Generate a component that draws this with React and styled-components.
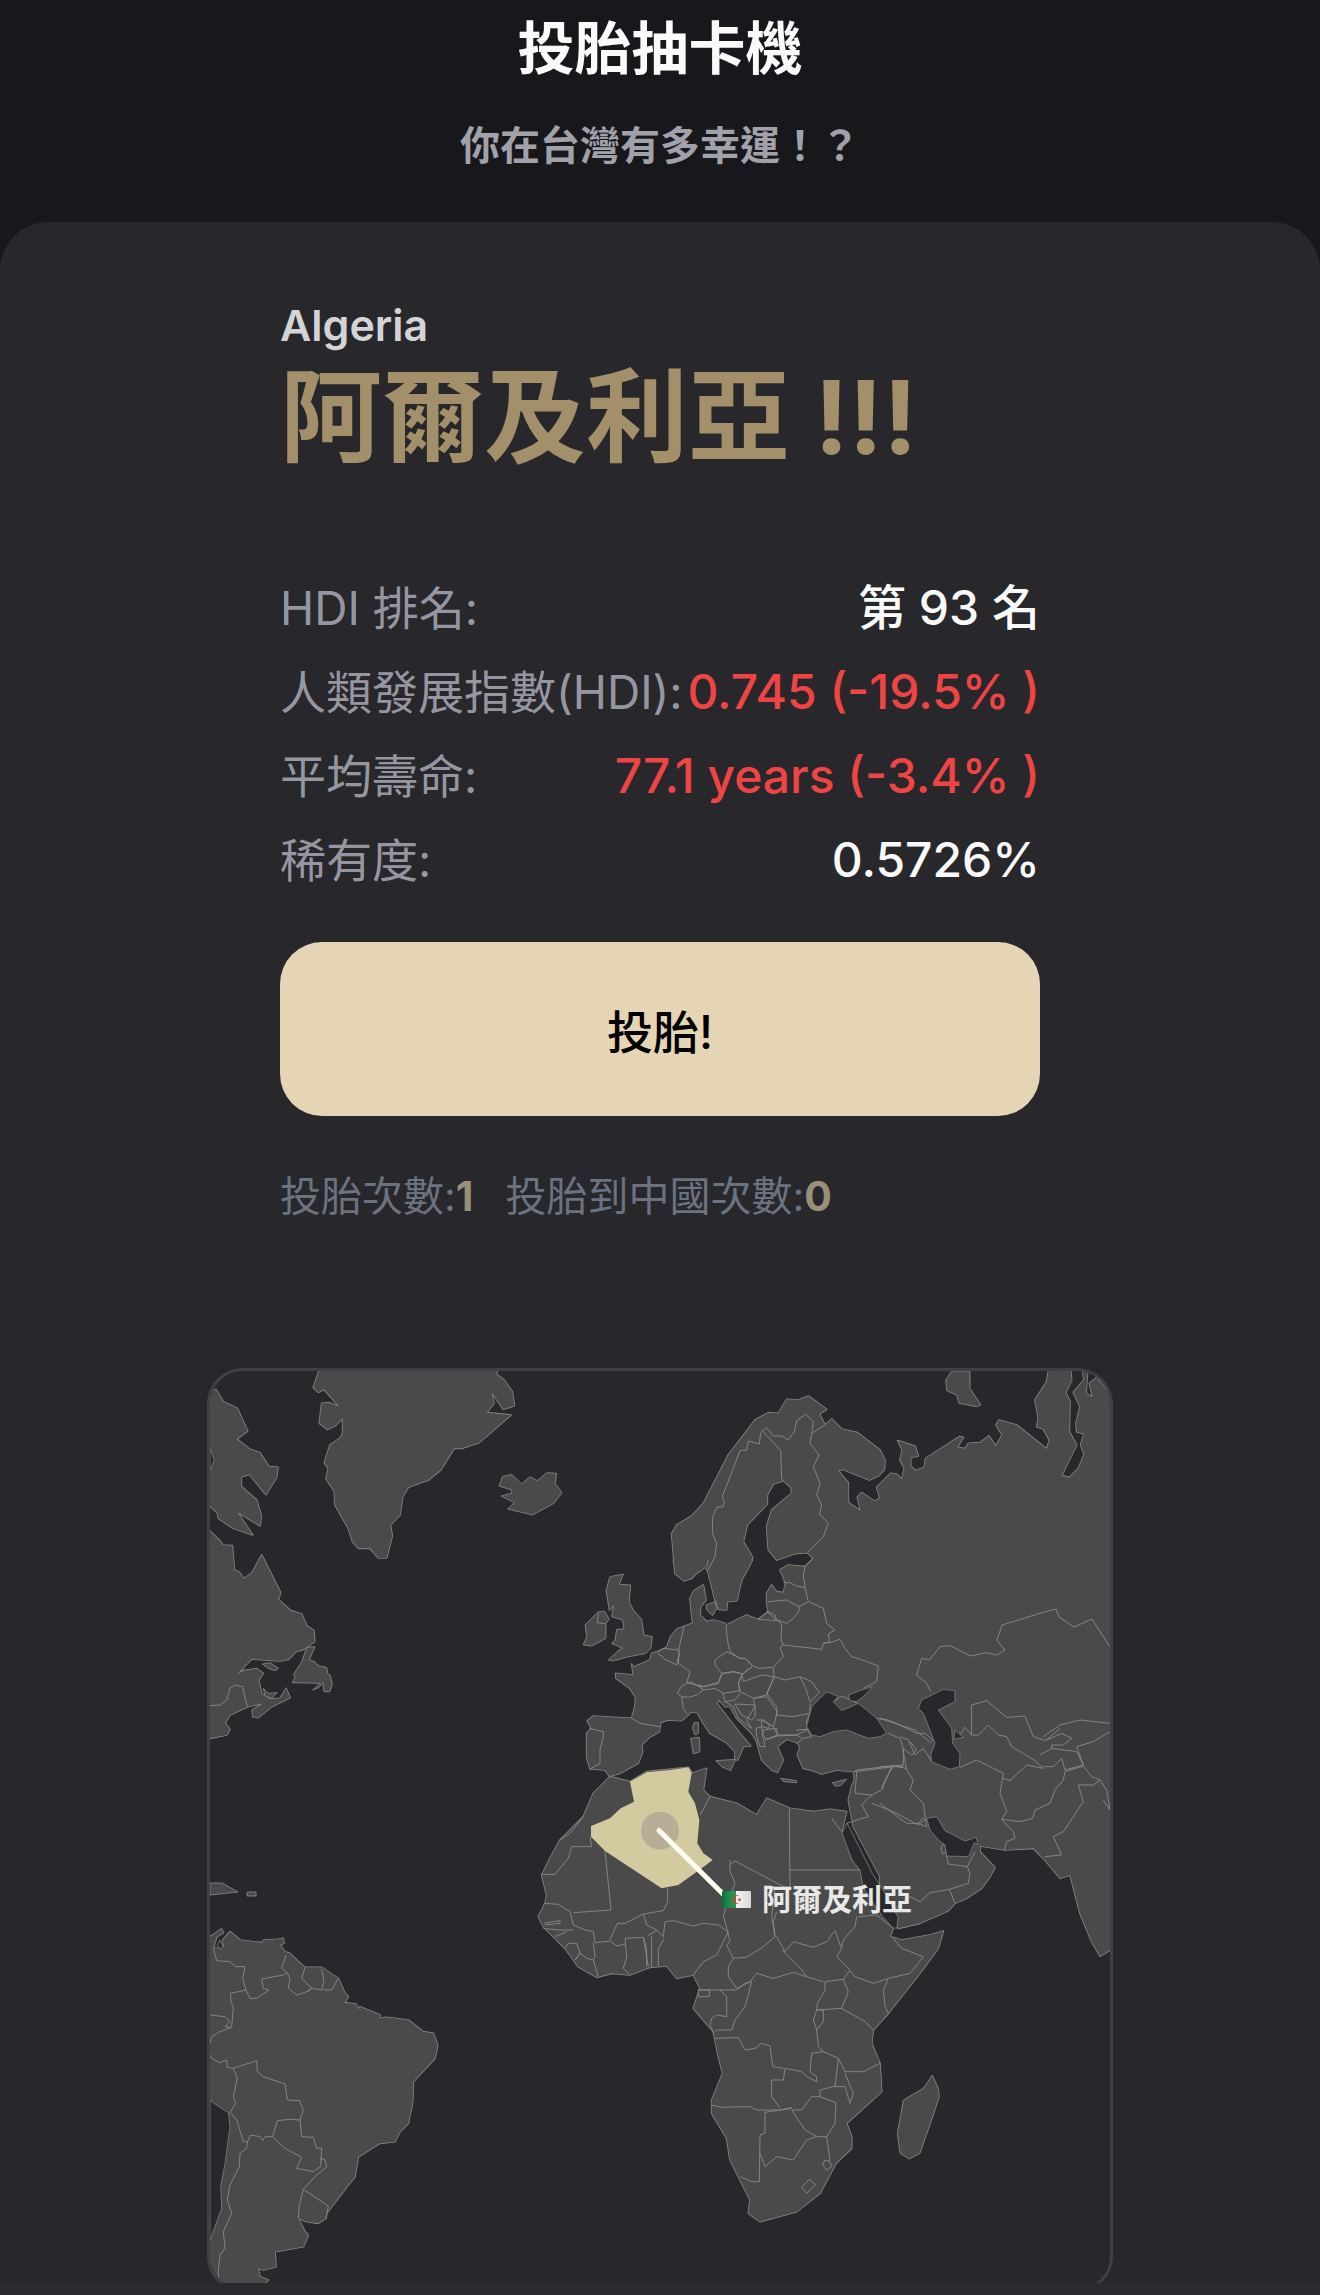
import React from 'react';
import styled, { createGlobalStyle } from 'styled-components';

const GlobalStyle = createGlobalStyle`
  html, body {
    margin: 0;
    padding: 0;
    background: #18181c;
  }
  body {
    font-family: Inter, "Noto Sans CJK TC", sans-serif;
  }
`;

const Page = styled.div`
  width: 1320px;
  height: 2295px;
  overflow: hidden;
  display: flex;
  flex-direction: column;
`;

const Header = styled.header`
  height: 222px;
  flex: none;
  padding-top: 13px;
  box-sizing: border-box;
  text-align: center;
`;

const Title = styled.h1`
  margin: 0;
  font-size: 57px;
  line-height: 72px;
  font-weight: 700;
  color: #fafafa;
`;

const Subtitle = styled.p`
  margin: 31px 0 0;
  font-size: 40px;
  line-height: 60px;
  font-weight: 700;
  color: #a1a1aa;
`;

const Card = styled.main`
  flex: none;
  height: 2061px;
  box-sizing: border-box;
  background: #27272c;
  border-radius: 48px 48px 0 0;
  padding-top: 73px;
  display: flex;
  flex-direction: column;
  align-items: center;
  overflow: hidden;
`;

const Content = styled.section`
  width: 760px;
  flex: none;
`;

const Eyebrow = styled.div`
  font-size: 43px;
  line-height: 60px;
  font-weight: 600;
  color: #d4d4d4;
`;

const CountryName = styled.div`
  font-size: 102px;
  line-height: 120px;
  font-weight: 700;
  color: #a38f69;
  white-space: nowrap;
  padding-top: 2px;
  margin-bottom: -2px;
`;

const Stats = styled.dl`
  margin: 103px 0 0;
  display: flex;
  flex-direction: column;
  gap: 24px;
`;

const StatRow = styled.div`
  display: flex;
  justify-content: space-between;
  height: 60px;
  line-height: 60px;
  white-space: nowrap;
`;

const StatLabel = styled.dt`
  font-size: 46px;
  color: #9696a0;
`;

const StatValue = styled.dd`
  margin: 0;
  font-size: 48px;
  font-weight: 500;
  color: ${(p) => (p.$bad ? '#ef4444' : '#fafafa')};
`;

const DrawButton = styled.button`
  display: block;
  width: 760px;
  height: 174px;
  margin-top: 52px;
  border: none;
  border-radius: 42px;
  background: #e5d5b5;
  color: #000;
  font: 500 46px Inter, "Noto Sans CJK TC", sans-serif;
`;

const Counts = styled.div`
  margin-top: 50px;
  height: 60px;
  line-height: 60px;
  font-size: 41px;
  color: #6b7280;
  display: flex;
  gap: 32px;
  white-space: nowrap;
`;

const CountNumber = styled.b`
  font-weight: 700;
  color: #9a8f78;
`;

const MapFrame = styled.div`
  position: relative;
  flex: none;
  width: 906px;
  height: 924px;
  margin-top: 142px;
  box-sizing: border-box;
  border: 3px solid #3f3f46;
  border-radius: 36px;
  overflow: hidden;
  background: #27272c;
`;

const MapSvg = styled.svg`
  display: block;
`;

const Fill = styled.path`
  fill: #4a4a4a;
`;

const Outline = styled.path`
  fill: none;
  stroke: #858585;
  stroke-width: 5;
  stroke-linejoin: round;
`;

const Sea = styled.path`
  fill: #27272c;
  stroke: #808080;
  stroke-width: 0.8;
  stroke-linejoin: round;
  vector-effect: non-scaling-stroke;
`;

const Island = styled.path`
  fill: #4a4a4a;
  stroke: #858585;
  stroke-width: 0.9;
  stroke-linejoin: round;
  vector-effect: non-scaling-stroke;
`;

const Border = styled.path`
  fill: none;
  stroke: #8a8a8a;
  stroke-width: 0.9;
  stroke-linejoin: round;
  vector-effect: non-scaling-stroke;
`;

const Pin = styled.div`
  position: absolute;
  left: 512px;
  top: 510px;
  display: flex;
  align-items: center;
  gap: 11px;
  color: #e8e8e8;
  font-size: 30px;
  line-height: 36px;
  font-weight: 700;
  white-space: nowrap;
`;

const BottomBar = styled.div`
  flex: none;
  height: 12px;
  background: #2a2a2f;
`;

// every group is traced at 3x from a crop whose top-left corner is at x, y
const crop = (x, y) => `translate(${x} ${y}) scale(${1 / 3})`;

const LAND = [
  // canada, arctic
  [200, 1360, 'M30 95 L48 88 L70 125 L112 145 L143 213 L110 237 L150 268 L180 278 L207 320 L234 322 L230 352 L198 404 L148 343 L124 350 L124 380 L170 420 L184 468 L180 497 L112 456 L158 525 L100 505 L55 475 L52 458 L30 438 Z'],
  // canada, mainland
  [200, 1360, 'M30 513 L62 545 L68 555 L97 557 L103 630 L118 637 L132 657 L157 637 L185 585 L242 698 L235 718 L272 752 L305 762 L320 797 L342 812 L344 845 L310 868 L288 875 L265 898 L240 903 L155 897 L135 918 L68 990 L100 950 L130 932 L170 926 L190 940 L176 960 L185 1002 L210 1017 L240 1015 L258 985 L270 1013 L215 1040 L175 1073 L158 1070 L157 1050 L190 1030 L143 1040 L90 1065 L75 1090 L90 1108 L80 1125 L30 1135 Z'],
  // greenland
  [200, 1360, 'M357 33 L340 82 L355 97 L372 88 L418 140 L388 128 L365 130 L358 190 L382 208 L405 198 L428 175 L428 220 L420 235 L390 255 L373 308 L385 325 L378 355 L403 395 L405 435 L445 505 L458 545 L475 565 L510 565 L535 594 L560 594 L577 527 L571 495 L600 465 L608 410 L625 382 L685 360 L722 330 L763 265 L785 265 L837 248 L933 165 L860 158 L882 130 L875 97 L910 148 L943 137 L937 95 L912 60 L888 42 L893 33 Z'],
  // scandinavia and russia
  [660, 1360, 'M35 522 L50 495 L95 468 L130 430 L205 285 L285 180 L325 158 L355 160 L380 118 L415 120 L445 108 L500 148 L478 162 L495 195 L515 177 L545 207 L592 218 L660 270 L675 300 L673 328 L655 348 L628 360 L548 328 L535 332 L565 368 L565 428 L602 452 L592 412 L605 398 L645 424 L660 415 L650 382 L692 340 L710 342 L725 358 L733 325 L720 300 L727 270 L713 242 L765 258 L775 288 L752 293 L752 318 L767 332 L793 322 L797 295 L898 230 L910 232 L892 262 L915 266 L925 250 L960 248 L987 228 L1007 258 L1027 225 L1008 195 L1017 180 L1070 195 L1160 267 L1168 240 L1150 207 L1130 200 L1135 175 L1125 120 L1160 65 L1165 33 L1232 33 L1235 60 L1217 97 L1230 125 L1228 215 L1250 255 L1205 347 L1228 353 L1255 325 L1273 283 L1262 255 L1272 222 L1250 215 L1248 190 L1260 140 L1240 97 L1272 60 L1268 33 L1283 33 L1278 100 L1298 112 L1288 70 L1310 53 L1345 95 L1360 140 L1360 900 L1000 900 L445 720 L445 625 L460 595 L443 578 L410 580 L350 600 L325 570 L320 500 L335 450 L395 400 L393 382 L370 362 L340 372 L322 405 L322 432 L262 495 L250 545 L278 592 L262 630 L243 640 L232 720 L165 720 L143 632 L130 615 L95 655 L72 662 L45 640 Z'],
  // tip of norway and sweden
  [570, 1560, 'M310 0 L320 45 L345 62 L395 30 L405 20 L418 0 Z'],
  [570, 1560, 'M413 20 L425 70 L445 148 L470 150 L472 125 L500 122 L515 60 L547 0 L420 0 Z'],
  // europe, turkey and the levant
  [570, 1560, 'M365 165 L368 190 L345 198 L320 208 L302 230 L290 262 L262 275 L245 280 L240 300 L190 322 L185 312 L190 345 L137 340 L138 355 L180 385 L197 412 L195 440 L185 475 L130 472 L70 468 L52 483 L65 505 L50 520 L50 590 L60 627 L105 630 L118 648 L150 640 L205 610 L218 575 L215 555 L238 532 L268 515 L272 487 L295 480 L335 482 L365 455 L382 458 L400 490 L420 520 L470 548 L495 575 L495 598 L503 600 L520 560 L542 558 L510 520 L475 475 L460 455 L440 430 L448 420 L465 440 L480 440 L500 475 L545 520 L560 545 L575 600 L605 630 L622 637 L640 600 L622 560 L650 537 L682 548 L690 560 L682 585 L700 625 L730 632 L755 642 L800 630 L852 635 L853 660 L845 680 L835 720 L850 800 L930 950 L1200 720 L1200 0 L725 0 L705 20 L655 15 L630 30 L640 52 L647 70 L640 98 L620 95 L605 75 L590 100 L590 130 L595 155 L565 178 L545 172 L530 165 L470 195 L465 190 L430 180 L410 185 L390 165 L392 140 L408 120 L400 75 L372 92 L360 115 Z'],
  // asia, iran to india
  [880, 1640, 'M0 0 L700 0 L700 925 L660 948 L635 905 L600 820 L570 705 L540 715 L515 685 L490 655 L460 625 L375 630 L300 618 L300 635 L345 683 L330 710 L305 745 L260 775 L225 790 L205 812 L120 850 L55 865 L9 750 L0 740 Z'],
  // africa
  [530, 1860, 'M35 45 L60 -5 L90 -60 L160 -130 L190 -200 L240 -250 L300 -235 L350 -265 L475 -278 L487 -260 L530 -275 L520 -210 L540 -190 L620 -170 L680 -135 L710 -185 L780 -155 L850 -145 L900 -152 L950 -145 L935 -85 L965 0 L990 30 L1000 80 L1030 130 L1060 170 L1090 205 L1080 230 L1115 240 L1200 225 L1240 213 L1225 265 L1170 340 L1075 460 L1030 510 L1025 550 L1050 610 L1055 695 L1000 745 L950 790 L965 830 L965 865 L918 910 L905 935 L870 1000 L800 1055 L690 1085 L655 1060 L660 1020 L630 960 L600 900 L590 835 L545 760 L545 720 L578 640 L565 590 L550 515 L490 445 L510 385 L490 345 L440 355 L410 318 L360 322 L300 345 L245 340 L200 352 L145 320 L105 265 L70 230 L40 200 L25 170 L45 130 L50 105 Z'],
  // south america
  [200, 1910, 'M30 80 L65 57 L70 68 L50 80 L40 115 L60 115 L72 108 L68 90 L90 65 L120 90 L185 98 L192 90 L235 88 L250 85 L252 100 L240 105 L255 125 L270 130 L295 155 L315 172 L365 172 L415 205 L435 250 L445 260 L433 278 L468 282 L475 298 L480 290 L540 315 L540 325 L560 322 L625 330 L670 365 L700 370 L713 405 L705 445 L640 515 L638 575 L625 640 L600 665 L585 695 L540 700 L475 740 L465 800 L445 825 L380 910 L378 925 L355 940 L320 935 L295 925 L315 965 L325 975 L310 1010 L225 1025 L228 1070 L190 1080 L175 1075 L180 1100 L205 1110 L190 1125 L30 1125 Z'],
];

const SEAS = [
  [200, 1360, 'M30 265 L43 300 L30 330 Z'],
  [570, 1560, 'M710 500 L725 440 L770 395 L805 410 L790 425 L815 452 L865 430 L920 475 L950 520 L930 530 L895 535 L830 510 L790 515 L750 530 L725 525 Z'],
  [570, 1560, 'M835 405 L875 390 L908 380 L880 410 L860 425 L840 422 Z'],
  [880, 1640, 'M190 148 L225 152 L225 185 L175 210 L215 265 L218 310 L240 340 L238 380 L210 388 L155 365 L152 345 L165 310 L130 220 L115 205 L125 180 Z'],
  [880, 1640, 'M225 270 L250 292 L222 298 Z'],
  [880, 1640, 'M140 535 L170 530 L195 572 L255 603 L288 592 L295 615 L283 608 L270 640 L265 650 L200 648 L195 615 L175 600 L150 570 Z'],
  // red sea, on page coordinates
  [0, 0, 'M2541 5469 L2589 5565 L2616 5619 L2649 5670 L2694 5751 L2691 5784 L2679 5784 L2649 5751 L2619 5709 L2589 5661 L2580 5610 L2556 5580 L2526 5499 Z'],
  [200, 1910, 'M30 572 L65 595 L85 608 L90 650 L75 760 L62 830 L65 895 L30 990 Z'],
  [200, 1910, 'M60 90 L68 110 L60 118 L52 105 Z'],
];

const ISLANDS = [
  [200, 1360, 'M907 350 L935 343 L965 372 L990 350 L1012 362 L1040 338 L1070 340 L1066 370 L1086 398 L1062 430 L997 465 L923 447 L943 428 L903 408 L935 400 L935 390 L897 378 Z'],
  [200, 1360, 'M345 860 L320 862 L305 905 L280 945 L285 952 L277 968 L360 970 L338 990 L358 982 L368 968 L372 995 L390 995 L397 970 L390 945 L383 940 L380 922 L360 918 L348 912 L345 905 L328 900 Z'],
  [200, 1360, 'M187 912 L210 908 L236 925 L225 932 L205 925 Z'],
  [200, 1360, 'M190 985 L205 1000 L232 998 L215 1015 L195 1008 Z'],
  [660, 1360, 'M875 33 L857 60 L860 92 L890 105 L897 130 L950 140 L963 135 L930 85 L930 33 Z'],
  [570, 1560, 'M120 50 L160 42 L148 73 L182 75 L178 125 L190 150 L215 178 L222 225 L247 230 L243 265 L228 280 L168 292 L130 303 L115 300 L147 270 L158 265 L125 250 L135 240 L140 208 L162 207 L158 180 L125 170 L130 138 L118 152 L108 90 Z'],
  [570, 1560, 'M85 155 L105 155 L118 178 L108 190 L108 235 L90 245 L65 258 L40 255 L50 230 L45 195 Z'],
  [570, 1560, 'M408 135 L435 125 L440 145 L428 167 L410 150 Z'],
  [570, 1560, 'M372 488 L385 487 L385 520 L375 525 L367 505 Z'],
  [570, 1560, 'M362 535 L388 532 L390 575 L370 582 Z'],
  [570, 1560, 'M437 602 L497 598 L482 632 L455 620 Z'],
  [570, 1560, 'M632 655 L680 662 L680 668 L640 665 Z'],
  [570, 1560, 'M787 668 L830 658 L812 677 L795 678 Z'],
  [530, 1860, 'M1207 645 L1225 685 L1228 710 L1210 765 L1170 880 L1138 897 L1110 880 L1102 820 L1120 720 L1180 685 Z'],
  [880, 1640, 'M190 612 L198 620 L196 640 L188 642 L183 625 Z'],
  // caribbean, on page coordinates
  [0, 0, 'M630 5649 L666 5649 L714 5676 L630 5685 Z'],
  [0, 0, 'M741 5676 L768 5676 L768 5688 L741 5688 Z'],
];

const BORDERS = [
  [200, 1360, 'M30 1037 L62 1035 L80 1020 L90 985 L105 975 L128 980 L135 1015 L143 1040'],
  // scandinavia
  [660, 1360, 'M143 632 L165 590 L170 550 L157 520 L158 470 L170 442 L190 440 L193 425 L187 410 L240 272 L260 270 L265 243 L298 252 L302 218 L320 203 L340 228 L365 228 L385 240 L403 215 L410 182 L437 163 L460 185 L455 220 L450 250 L477 285 L460 320 L480 370 L470 405 L485 435 L478 462 L505 490 L490 530 L443 578'],
  [660, 1360, 'M310 215 L362 272 L365 355 L370 362'],
  [660, 1360, 'M455 220 L495 195'],
  [570, 1560, 'M410 22 L415 0'],
  // ireland
  [570, 1560, 'M85 160 L82 188 L108 192'],
  // baltics and eastern europe
  [570, 1560, 'M725 0 L705 20 L700 45 L705 80'],
  [570, 1560, 'M640 68 L660 68 L680 78 L705 82 L715 125 L687 140 L650 120 L595 125'],
  [570, 1560, 'M590 155 L620 180 L650 190 L670 175 L688 150 L687 140'],
  [570, 1560, 'M715 125 L760 145 L770 190 L795 210 L775 222 L778 245 L760 250 L755 268 L730 265 L640 255 L633 240 L635 195 L625 182'],
  [570, 1560, 'M565 178 L595 155 L615 165 L620 182 Z'],
  [570, 1560, 'M468 195 L472 240 L480 275 L510 295 L525 295 L545 315 L565 325 L610 322 L640 290 L630 262 L640 255'],
  [570, 1560, 'M760 250 L780 248 L810 238 L825 265 L845 290 L870 298 L890 305 L925 318 L920 365 L880 385'],
  [570, 1560, 'M790 425 L815 408 L862 430'],
  [570, 1560, 'M610 325 L612 350 L645 360 L690 350 L725 365 L748 398 L720 425 L705 380 L690 352'],
  [570, 1560, 'M612 352 L590 400 L620 440 L620 465 L670 470 L720 460 L720 430'],
  [570, 1560, 'M515 345 L520 365 L575 345 L612 350 L590 405 L550 415 L510 395 L505 370 L515 345'],
  [570, 1560, 'M515 345 L545 320'],
  [570, 1560, 'M435 300 L470 275 L510 295 L525 295 L548 318 L518 342 L490 335 L455 340 L435 315 Z'],
  [570, 1560, 'M342 200 L328 260 L325 310 L360 335 L350 368 L400 380 L445 368 L455 340'],
  [570, 1560, 'M265 275 L280 265 L322 270'],
  [570, 1560, 'M262 278 L285 298 L320 315 L328 280 L322 265'],
  [570, 1560, 'M385 375 L400 380 L445 370 L455 342 L490 335 L518 342 L505 370 L510 392 L460 400 L435 385 L400 390 Z'],
  [570, 1560, 'M322 400 L335 378 L360 365 L385 378 L400 390 L380 405 L355 412 L335 410 Z'],
  [570, 1560, 'M335 410 L340 445 L350 460'],
  [570, 1560, 'M185 475 L210 490 L240 495 L270 500'],
  [570, 1560, 'M58 505 L100 515 L100 530 L90 570 L90 610 L60 627'],
  [570, 1560, 'M458 398 L465 425 L495 420 L510 400'],
  [570, 1560, 'M465 425 L490 440 L505 475 L545 505 L530 480 L555 440 L550 415'],
  [570, 1560, 'M495 432 L555 435 L555 470 L545 480 L515 465 Z'],
  [570, 1560, 'M550 415 L590 410 L622 455 L610 500 L580 480 L560 480'],
  [570, 1560, 'M575 480 L600 495 L595 505 L575 500 Z'],
  [570, 1560, 'M580 510 L620 505 L622 525 L590 538 L578 525 Z'],
  [570, 1560, 'M558 505 L575 500 L580 535 L585 560 L570 560 L560 530 Z'],
  [570, 1560, 'M720 460 L710 480 L712 510 L680 525 L622 525 L610 500'],
  [570, 1560, 'M585 540 L620 528 L680 525 L695 535'],
  [570, 1560, 'M680 510 L712 508 L725 530 L700 535 L680 550'],
  [570, 1560, 'M920 475 L955 480 L1000 500 L1040 520 L1065 520 L1100 550'],
  [570, 1560, 'M955 520 L990 535 L1000 565 L1000 615'],
  [570, 1560, 'M852 635 L860 630 L945 620 L1000 615'],
  [570, 1560, 'M1000 565 L1025 585 L1040 570 L1020 545'],
  // central asia and the middle east
  [880, 1640, 'M0 235 L60 255 L105 270 L130 290 L155 310'],
  [880, 1640, 'M60 290 L85 300 L105 345 L130 325 L155 365'],
  [880, 1640, 'M68 325 L80 390 L100 420 L90 450 L130 490 L135 530 L140 560 L115 550 L130 532'],
  [880, 1640, 'M0 380 L40 378 L80 385'],
  [880, 1640, 'M40 378 L15 420 L5 445'],
  [880, 1640, 'M0 490 L80 550 L115 550'],
  [880, 1640, 'M240 382 L290 360 L340 385 L370 400 L360 460 L380 515 L365 538 L400 575 L405 595 L380 605 L373 630'],
  [880, 1640, 'M370 415 L390 422 L440 375 L490 385'],
  [880, 1640, 'M275 285 L275 195 L320 182 L380 232 L435 228 L460 290 L497 302 L540 265'],
  [880, 1640, 'M240 285 L255 262 L275 285 L295 285 L325 255 L355 285 L380 290 L395 320 L465 362 L490 385'],
  [880, 1640, 'M490 290 L540 255 L600 240 L690 250'],
  [880, 1640, 'M500 300 L545 280 L575 295 L550 315 L515 315 L515 325'],
  [880, 1640, 'M480 345 L515 325 L590 335 L610 375 L555 390 L545 355 L520 380 L490 380'],
  [880, 1640, 'M365 538 L420 545 L458 535 L465 510 L510 490 L525 450 L550 420 L555 395 L610 378'],
  [880, 1640, 'M610 378 L635 410 L660 420 L640 435 L595 435 L610 485 L550 575 L520 590 L545 645 L495 650'],
  [880, 1640, 'M660 420 L680 450 L690 510 L670 480'],
  [880, 1640, 'M690 275 L640 305 L590 320 L610 375'],
  [880, 1640, 'M350 0 L375 30 L350 45 L320 38 L272 48 L210 17 L180 20 L148 60 L125 55 L110 105 L140 130 L152 155'],
  [880, 1640, 'M205 672 L262 680 L270 700 L265 730 L208 748 L225 790'],
  [880, 1640, 'M262 680 L285 635'],
  [880, 1640, 'M208 748 L150 758 L120 785 L90 770 L40 810'],
  [880, 1640, 'M200 648 L205 672'],
  // kazakhstan and china, on page coordinates
  [0, 0, 'M3006 4875 L3123 4839 L3168 4827 L3177 4851 L3222 4881 L3276 4857 L3330 4941'],
  [0, 0, 'M3006 4875 L2991 4920'],
  // syria, jordan, saudi
  [560, 1740, 'M885 95 L1000 80 L1030 80'],
  [560, 1740, 'M995 80 L965 150 L935 165 L885 160 L890 95'],
  [560, 1740, 'M935 165 L905 195 L925 230 L860 250'],
  [560, 1740, 'M935 190 L1000 215 L1075 255 L1100 235 L1135 240'],
  [560, 1740, 'M815 235 L845 275'],
  // north africa
  [530, 1860, 'M540 -190 L510 -135'],
  [530, 1860, 'M778 -155 L780 90'],
  [530, 1860, 'M780 30 L990 30'],
  [530, 1860, 'M35 43 L75 43 L115 -5 L125 -40 L185 -40 L180 -70'],
  [530, 1860, 'M160 -130 L120 -80 L90 -60'],
  [530, 1860, 'M45 130 L85 133 L120 155 L130 195 L165 210 L190 215 L195 248 L240 243 L262 258 L287 252'],
  [530, 1860, 'M130 158 L243 150 L225 -27'],
  [530, 1860, 'M413 85 L413 125 L400 152 L340 162 L285 190 L262 190 L240 240'],
  [530, 1860, 'M340 162 L350 195 L380 210 L400 230 L405 185 L430 182 L490 198 L520 190 L565 195 L595 215 L560 285 L520 305 L490 345'],
  [530, 1860, 'M285 235 L340 232 L355 320'],
  [530, 1860, 'M285 235 L290 290 L280 325 L300 345'],
  [530, 1860, 'M340 232 L350 265 L350 320'],
  [530, 1860, 'M365 230 L365 320'],
  [530, 1860, 'M385 318 L385 265 L403 235'],
  [530, 1860, 'M352 228 L380 212'],
  [530, 1860, 'M105 265 L115 250 L140 250 L150 280 L135 300'],
  [530, 1860, 'M135 300 L150 280 L170 295 L190 300 L205 350'],
  [530, 1860, 'M190 248 L195 290 L190 300'],
  [530, 1860, 'M40 205 L85 210 L130 210'],
  [530, 1860, 'M42 190 L90 182 L90 190 L45 195'],
  [530, 1860, 'M75 230 L110 215'],
  [530, 1860, 'M600 0 L600 35 L615 70 L580 165 L590 205 L600 245 L590 255 L610 295 L650 292 L700 260 L735 230 L730 185 L740 155'],
  [530, 1860, 'M600 15 L615 3 L780 90'],
  [530, 1860, 'M735 80 L725 170 L735 230'],
  [530, 1860, 'M740 230 L765 275 L790 245 L850 262 L890 245 L915 212 L925 240 L935 265 L920 290 L960 330'],
  [530, 1860, 'M980 170 L975 200 L940 240 L935 265'],
  [530, 1860, 'M985 170 L1040 165 L1090 205'],
  [530, 1860, 'M610 295 L595 320 L595 350 L620 385 L660 365 L680 340 L730 355 L790 337 L830 350 L880 365'],
  [530, 1860, 'M755 270 L820 335 L830 350'],
  [530, 1860, 'M960 330 L940 358 L885 365'],
  [530, 1860, 'M1090 235 L1115 265 L1180 290 L1140 340 L1075 355 L1030 370 L975 350 L960 333'],
  [530, 1860, 'M1075 355 L1060 390 L1065 440 L1075 460'],
  [530, 1860, 'M940 358 L955 395 L935 445 L1005 485 L1030 510'],
  [530, 1860, 'M885 365 L885 390 L862 430 L860 450 L935 445'],
  [530, 1860, 'M860 450 L880 450 L880 485 L860 510 L850 480 Z'],
  [530, 1860, 'M860 510 L865 560 L880 575 L925 595 L945 635 L1000 635 L1050 610'],
  [530, 1860, 'M880 575 L845 580 L840 635 L860 650 L860 665 L830 650 L815 635 L765 625 L760 660 L725 660 L725 710 L750 745'],
  [530, 1860, 'M925 595 L915 680 L945 680 L960 730 L970 700 L945 640'],
  [530, 1860, 'M915 678 L870 690 L870 710 L918 728 L915 790 L890 830 L900 900 L895 905'],
  [530, 1860, 'M870 710 L845 710 L815 750 L785 750 L825 810 L860 830 L890 830'],
  [530, 1860, 'M785 745 L705 757 L705 820 L690 825 L688 965 L665 965 L630 950'],
  [530, 1860, 'M690 880 L705 920 L740 890 L790 900 L830 840 L860 830'],
  [530, 1860, 'M545 735 L575 742 L660 740 L680 750 L750 750 L785 743'],
  [530, 1860, 'M555 535 L625 533 L645 570 L675 565 L695 550 L720 558 L728 620 L760 625'],
  [530, 1860, 'M505 390 L620 390 L645 370 L665 365 L645 440 L615 480 L605 510 L560 510 L550 520'],
  [530, 1860, 'M505 390 L538 390 L538 410 L505 410 Z'],
  [530, 1860, 'M570 390 L590 410 L590 470 L560 465 L545 475 L540 495 L550 515'],
  [530, 1860, 'M885 900 L900 905 L905 920 L890 930 L878 915 Z'],
  [530, 1860, 'M838 958 L857 975 L830 1000 L815 982 Z'],
  // south america
  [200, 1910, 'M40 115 L50 152 L90 155 L105 170 L135 170 L128 205 L138 240 L92 250 L92 270 L100 295 L95 350'],
  [200, 1910, 'M138 240 L150 265 L170 265 L207 240 L190 235 L185 207 L250 195 L262 188 L245 175 L258 135'],
  [200, 1910, 'M262 190 L270 205 L265 235 L290 255 L320 245 L335 235 L305 205 L315 172'],
  [200, 1910, 'M325 245 L335 235 L365 240 L372 215 L365 178'],
  [200, 1910, 'M372 240 L395 240 L415 205'],
  [200, 1910, 'M30 315 L75 320 L90 335 L75 350 L95 352 L60 365 L35 380 L30 400'],
  [200, 1910, 'M30 435 L35 445 L60 458 L80 450 L82 472 L100 475 L115 470 L170 452 L172 485 L190 500 L255 522 L262 570 L298 572 L310 600 L300 630'],
  [200, 1910, 'M100 475 L112 505 L100 560 L107 580 L90 607 L110 630 L130 695 L142 695 L152 675 L180 680 L188 692 L195 680 L218 680'],
  [200, 1910, 'M218 680 L232 632 L270 628 L300 630 L305 680 L340 682 L350 715 L365 715 L362 770 L340 785 L290 775 L305 742 L255 715 L218 680'],
  [200, 1910, 'M360 745 L375 750 L380 770 L345 800 L310 838'],
  [200, 1910, 'M310 838 L385 888 L378 925'],
  [200, 1910, 'M310 838 L298 885 L295 925'],
  [200, 1910, 'M142 695 L140 715 L120 730 L118 770 L90 825 L82 870 L95 910 L70 965 L75 1015 L60 1035 L55 1080 L55 1125'],
];

const ALGERIA = 'M210 125 L260 97 L330 90 L385 82 L395 100 L385 155 L405 190 L418 240 L412 310 L430 340 L458 360 L425 385 L355 435 L305 445 L135 333 L93 290 L93 258 L150 235 L182 205 L222 185 Z';

const AlgeriaFlag = () => (
  <svg width="29" height="19" viewBox="0 0 29 19">
    <defs>
      <linearGradient id="flag-shine" x1="0" x2="1" y1="0" y2="0">
        <stop offset="0" stopColor="#000" stopOpacity="0.2" />
        <stop offset="0.45" stopColor="#fff" stopOpacity="0.1" />
        <stop offset="1" stopColor="#000" stopOpacity="0.12" />
      </linearGradient>
    </defs>
    <path d="M1 1 H14 V18 H1 Q0 18 0 17 V2 Q0 1 1 1 Z" fill="#0f8a3f" />
    <path d="M14 1 H28 Q29 1 29 2 V17 Q29 18 28 18 H14 Z" fill="#f4f4f4" />
    <path d="M17 5.4 A4.4 4.4 0 1 0 17 13.6 A3.6 3.6 0 1 1 17 5.4 Z" fill="#e8212e" />
    <path d="M17.5 7.5 L18 9 L19.6 9 L18.3 9.9 L18.8 11.4 L17.5 10.5 L16.2 11.4 L16.7 9.9 L15.4 9 L17 9 Z" fill="#e8212e" />
    <path d="M1 1 H28 Q29 1 29 2 V17 Q29 18 28 18 H1 Q0 18 0 17 V2 Q0 1 1 1 Z" fill="url(#flag-shine)" />
  </svg>
);

const WorldMap = () => (
  <MapFrame>
    <MapSvg width="900" height="918" viewBox="210 1371 900 918">
      {LAND.map(([x, y, d], i) => (
        <g key={i} transform={crop(x, y)}>
          <Outline d={d} />
        </g>
      ))}
      {LAND.map(([x, y, d], i) => (
        <g key={i} transform={crop(x, y)}>
          <Fill d={d} />
        </g>
      ))}
      {ISLANDS.map(([x, y, d], i) => (
        <g key={i} transform={crop(x, y)}>
          <Island d={d} />
        </g>
      ))}
      {BORDERS.map(([x, y, d], i) => (
        <g key={i} transform={crop(x, y)}>
          <Border d={d} />
        </g>
      ))}
      {SEAS.map(([x, y, d], i) => (
        <g key={i} transform={crop(x, y)}>
          <Sea d={d} />
        </g>
      ))}
      <g transform={crop(560, 1740)}>
        <path d={ALGERIA} fill="#d3cba0" />
        <circle cx="300" cy="272" r="57" fill="#b8ae98" />
      </g>
      <line x1="659" y1="1830.5" x2="723" y2="1894" stroke="#fffdf2" strokeWidth="5" strokeLinecap="round" />
    </MapSvg>
    <Pin>
      <AlgeriaFlag />
      <span>阿爾及利亞</span>
    </Pin>
  </MapFrame>
);

const App = () => (
  <Page>
    <GlobalStyle />
    <Header>
      <Title>投胎抽卡機</Title>
      <Subtitle>你在台灣有多幸運！？</Subtitle>
    </Header>
    <Card>
      <Content>
        <Eyebrow>Algeria</Eyebrow>
        <CountryName>阿爾及利亞 !!!</CountryName>
        <Stats>
          <StatRow>
            <StatLabel>HDI 排名:</StatLabel>
            <StatValue>第 93 名</StatValue>
          </StatRow>
          <StatRow>
            <StatLabel>人類發展指數(HDI):</StatLabel>
            <StatValue $bad>0.745 (-19.5% )</StatValue>
          </StatRow>
          <StatRow>
            <StatLabel>平均壽命:</StatLabel>
            <StatValue $bad>77.1 years (-3.4% )</StatValue>
          </StatRow>
          <StatRow>
            <StatLabel>稀有度:</StatLabel>
            <StatValue>0.5726%</StatValue>
          </StatRow>
        </Stats>
        <DrawButton>投胎!</DrawButton>
        <Counts>
          <span>投胎次數:<CountNumber>1</CountNumber></span>
          <span>投胎到中國次數:<CountNumber>0</CountNumber></span>
        </Counts>
      </Content>
      <WorldMap />
    </Card>
    <BottomBar />
  </Page>
);

export default App;
